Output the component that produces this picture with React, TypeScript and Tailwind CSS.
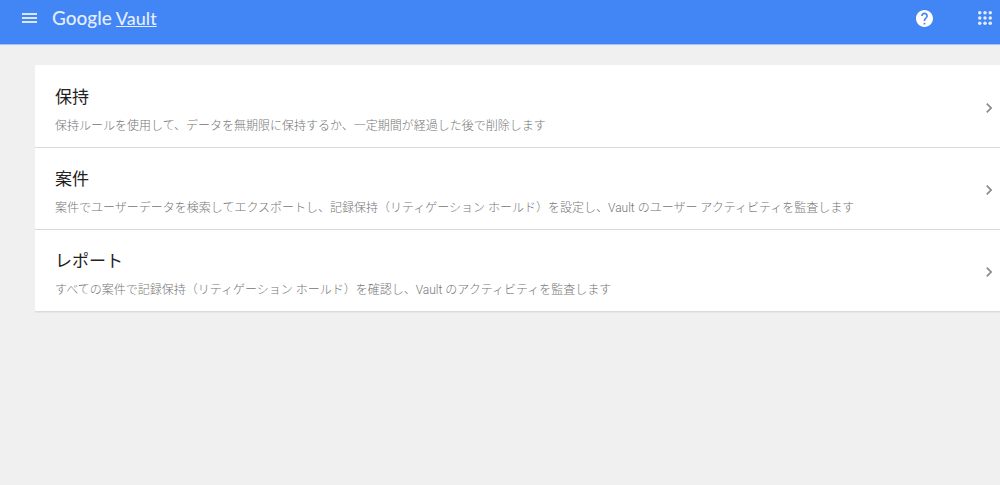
import React from 'react';

interface Section {
  title: string;
  description: string;
}

const sections: Section[] = [
  {
    title: '保持',
    description: '保持ルールを使用して、データを無期限に保持するか、一定期間が経過した後で削除します',
  },
  {
    title: '案件',
    description:
      '案件でユーザーデータを検索してエクスポートし、記録保持（リティゲーション ホールド）を設定し、Vault のユーザー アクティビティを監査します',
  },
  {
    title: 'レポート',
    description: 'すべての案件で記録保持（リティゲーション ホールド）を確認し、Vault のアクティビティを監査します',
  },
];

const Header: React.FC = () => (
  <header className="flex h-[45px] items-center border-b border-[#a3c4f8] bg-[#4285f4] pr-2 pb-2 pl-[21px] text-white">
    <button type="button" aria-label="メニュー" className="text-[#d9e7fd]">
      <svg viewBox="0 0 16 12" className="h-3 w-4" fill="currentColor">
        <path d="M1 1h15v2H1zM1 5h15v2H1zM1 9h15v2H1z" />
      </svg>
    </button>
    <div className="ml-[15px] flex items-baseline gap-1 font-['Lato',sans-serif] leading-6 font-medium text-[#e3edfe]">
      <span className="text-[19px]">Google</span>
      <a href="#" className="text-[18px] underline decoration-1 underline-offset-1">
        Vault
      </a>
    </div>
    <div className="ml-auto flex items-center gap-[45px]">
      <button type="button" aria-label="ヘルプ">
        <svg viewBox="2 2 20 20" className="h-[17px] w-[17px]" fill="currentColor">
          <path d="M12 2C6.48 2 2 6.48 2 12s4.48 10 10 10 10-4.48 10-10S17.52 2 12 2zm1 17h-2v-2h2v2zm2.07-7.75l-.9.92C13.45 12.9 13 13.5 13 15h-2v-.5c0-1.1.45-2.1 1.17-2.83l1.24-1.26c.37-.36.59-.86.59-1.41 0-1.1-.9-2-2-2s-2 .9-2 2H8c0-2.21 1.79-4 4-4s4 1.79 4 4c0 .88-.36 1.68-.93 2.25z" />
        </svg>
      </button>
      <button type="button" aria-label="Google アプリ" className="text-[#e3edfe]">
        <svg viewBox="0 0 16 16" className="h-[14px] w-[14px]" fill="currentColor">
          {[2, 8, 14].map((y) =>
            [2, 8, 14].map((x) => <circle key={`${x}-${y}`} cx={x} cy={y} r="2" />)
          )}
        </svg>
      </button>
    </div>
  </header>
);

const SectionRow: React.FC<Section> = ({ title, description }) => (
  <li className="border-b border-[#dadada]">
    <a href="#" className="flex items-center justify-between pt-[19px] pr-px pb-[13px] pl-5">
      <div>
        <h2 className="text-[17px] leading-6 text-[#212121]">{title}</h2>
        <p className="mt-[9px] text-[12px] leading-4 font-light text-[#757575]">{description}</p>
      </div>
      <svg viewBox="0 0 24 24" className="mb-1 h-5 w-5 shrink-0" fill="#8a8a8a">
        <path d="M10 6L8.59 7.41 13.17 12l-4.58 4.59L10 18l6-6z" />
      </svg>
    </a>
  </li>
);

const App: React.FC = () => {
  return (
    <div className="min-h-screen bg-[#f0f0f0] font-['Roboto','Noto_Sans_CJK_JP',sans-serif]" lang="ja">
      <Header />
      <main className="pt-5 pl-[35px]">
        <ul className="bg-white pt-px shadow-[0_1px_0_#e6e6e6]">
          {sections.map((section) => (
            <SectionRow key={section.title} {...section} />
          ))}
        </ul>
      </main>
    </div>
  );
};

export default App;
